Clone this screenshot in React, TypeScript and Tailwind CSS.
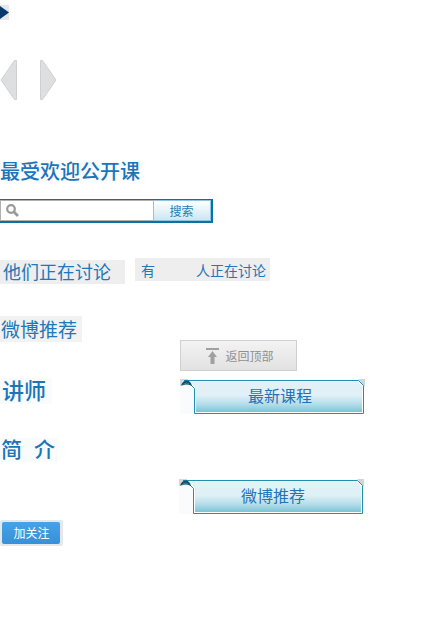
import React from "react";

const CJK = "font-['Noto_Sans_CJK_SC',sans-serif] leading-none whitespace-pre";

function Banner({ id, label, labelClass }: { id: string; label: string; labelClass: string }) {
  return (
    <div className="relative flex h-[35px] w-[185px] items-start">
      <svg className="absolute inset-0" width="185" height="35" viewBox="0 0 185 35">
        <defs>
          <linearGradient id={id} x1="0" y1="0" x2="0" y2="1">
            <stop offset="0" stopColor="#e2f2f7" />
            <stop offset="0.45" stopColor="#dff0f6" />
            <stop offset="0.75" stopColor="#b2dde8" />
            <stop offset="1" stopColor="#7cc4d8" />
          </linearGradient>
        </defs>
        <rect x="0" y="1" width="14" height="34" fill="#fafbfc" />
        <path d="M0 0h8v4L3 7H0z" fill="#d4d6d8" />
        <path d="M178 0h7v8z" fill="#d2d4d6" />
        <path d="M4 1.5H178.500L183.500 6.500V34.500H14.500V9.500L10 5z" fill="#fff" stroke="#1f8fb0" />
        <path d="M6 3H178L182 7V33H16V9L11 4z" fill={`url(#${id})`} />
        <path d="M1 6.500Q3 1.500 7 1.500Q11 2 12 7Q7 4.500 1 6.500z" fill="#0c5069" />
        <path d="M4 5Q7 3 9 5" fill="none" stroke="#2f8ba5" />
      </svg>
      <span className={`${CJK} relative mt-[8px] text-[16px] text-[#2273b9] ${labelClass}`}>{label}</span>
    </div>
  );
}

export default function App() {
  return (
    <main className="h-[625px] w-[428px] overflow-hidden bg-white">
      <div className="flex h-[60px] items-start pt-[5px]">
        <svg width="9" height="15" viewBox="0 0 9 15">
          <rect width="9" height="15" fill="#e5e7ea" />
          <path d="M0 1L9 7.500L0 14z" fill="#06386a" />
        </svg>
      </div>
      <div className="flex h-[101px] gap-[22px]">
        <svg width="18" height="41" viewBox="0 0 18 41">
          <path d="M16.500 .5V39.500H14.500L1 20L14.500 .5z" fill="#dedfe0" stroke="#cfd0d1" />
        </svg>
        <svg width="18" height="41" viewBox="0 0 18 41">
          <path d="M.5 .5V39.500H2.500L16 20L2.500 .5z" fill="#dedfe0" stroke="#cfd0d1" />
        </svg>
      </div>
      <div className="flex h-[38px]">
        <h1 className={`${CJK} h-[20px] w-[142px] bg-[#fafcfe] text-[20px] font-medium text-[#1b75bb]`}>最受欢迎公开课</h1>
      </div>
      <div className="flex h-[24px] w-[213px] border-y-2 border-t-[1px] border-r-2 border-[#0872a5]">
        <div className="flex w-[153px] items-center border border-r-0 border-[#b0b0b0] bg-white pl-[5px]">
          <svg width="13" height="13" viewBox="0 0 13 13" fill="none" stroke="#999">
            <circle cx="5" cy="5" r="3.800" strokeWidth="2.200" />
            <path d="M8 8L12 12" strokeWidth="2.600" />
          </svg>
        </div>
        <button className={`${CJK} flex flex-1 items-center justify-center border border-[#8ec5e4] bg-linear-to-b from-white to-[#cde6f3] pr-px text-[12px] text-[#1b7fba]`}>搜索</button>
      </div>
      <div className="flex h-[93px] items-start gap-[10px] pt-[35px]">
        <div className={`${CJK} mt-[2px] h-[24px] w-[125px] bg-[#eee] pt-[2px] pl-[3px] text-[18px] text-[#2277b8]`}>他们正在讨论</div>
        <div className={`${CJK} flex h-[23px] w-[135px] justify-between bg-[#eee] pt-[5px] pr-[4px] pl-[6px] text-[14px] text-[#2277b8]`}>
          <span>有</span>
          <span>人正在讨论</span>
        </div>
      </div>
      <div className="flex">
        <div className="w-[179px]">
          <div className={`${CJK} h-[26px] w-[82px] bg-[#f2f2f2] pt-[3px] pl-[1px] text-[19px] text-[#2277b8]`}>微博推荐</div>
          <div className={`${CJK} mt-[36px] h-[26px] w-[52px] bg-[#f9fbfd] pl-[2px] text-[22px] font-medium text-[#1b75bb]`}>讲师</div>
          <div className={`${CJK} mt-[34px] flex h-[24px] w-[58px] gap-[12px] bg-[#f9fbfd] pl-px text-[21px] font-medium text-[#1b75bb]`}>
            <span>简</span>
            <span>介</span>
          </div>
          <div className="mt-[58px] h-[26px] w-[63px] rounded-[2px] bg-[#e5e7e9] pt-[2px] pl-[2px]">
            <button className={`${CJK} block h-[22px] w-[58px] rounded-[2px] bg-linear-to-b from-[#47a2e6] to-[#3890d8] pb-px pl-px text-[12px] text-white`}>加关注</button>
          </div>
        </div>
        <div className="pt-[24px]">
          <button className={`${CJK} ml-px flex h-[31px] w-[117px] items-center justify-center gap-[5px] border border-[#d0d0d0] bg-linear-to-b from-[#f3f3f3] to-[#e2e2e2] pl-[2px] text-[12px] text-[#909090]`}>
            <svg width="15" height="16" viewBox="0 0 15 16" fill="#a0a0a0">
              <path d="M1 0H14V2H1zM7.500 3L12 9H9.500V16H5.500V9H3z" />
            </svg>
            返回顶部
          </button>
          <div className="mt-[8px] ml-px">
            <Banner id="courses" label="最新课程" labelClass="ml-[68px]" />
          </div>
          <div className="mt-[65px]">
            <Banner id="weibo" label="微博推荐" labelClass="ml-[62px]" />
          </div>
        </div>
      </div>
    </main>
  );
}
